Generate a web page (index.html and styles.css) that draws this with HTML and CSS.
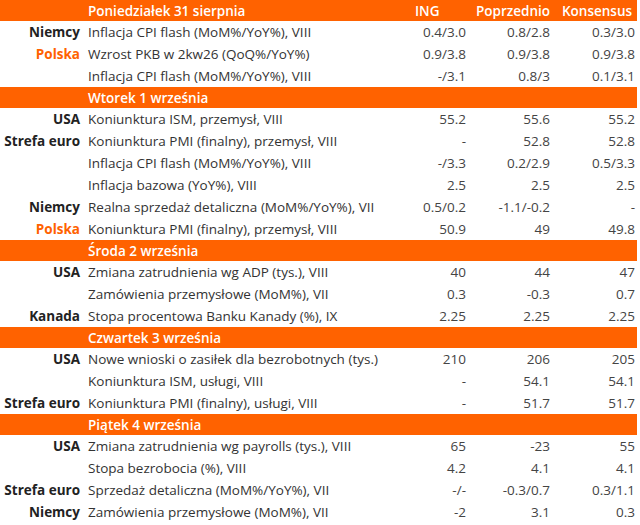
FILE: index.html
```html
<!DOCTYPE html>
<html lang="pl">
<head>
<meta charset="utf-8">
<title>Kalendarz</title>
<link rel="stylesheet" href="styles.css">
</head>
<body>
<table class="cal">
  <colgroup>
    <col class="c-country"><col class="c-desc"><col class="c-ing"><col class="c-prev"><col class="c-cons">
  </colgroup>
  <tbody>
    <tr class="day">
      <td></td><td class="day-title">Poniedziałek 31 sierpnia</td>
      <td class="h-ing">ING</td><td class="h-prev">Poprzednio</td><td class="h-cons">Konsensus</td>
    </tr>
    <tr><td class="cty">Niemcy</td><td class="desc">Inflacja CPI flash (MoM%/YoY%), VIII</td><td class="num">0.4/3.0</td><td class="num n2">0.8/2.8</td><td class="num n3">0.3/3.0</td></tr>
    <tr><td class="cty pl">Polska</td><td class="desc">Wzrost PKB w 2kw26 (QoQ%/YoY%)</td><td class="num">0.9/3.8</td><td class="num n2">0.9/3.8</td><td class="num n3">0.9/3.8</td></tr>
    <tr><td class="cty"></td><td class="desc">Inflacja CPI flash (MoM%/YoY%), VIII</td><td class="num">-/3.1</td><td class="num n2">0.8/3</td><td class="num n3">0.1/3.1</td></tr>

    <tr class="day"><td></td><td class="day-title">Wtorek 1 września</td><td></td><td></td><td></td></tr>
    <tr><td class="cty">USA</td><td class="desc">Koniunktura ISM, przemysł, VIII</td><td class="num">55.2</td><td class="num n2">55.6</td><td class="num n3">55.2</td></tr>
    <tr><td class="cty">Strefa euro</td><td class="desc">Koniunktura PMI (finalny), przemysł, VIII</td><td class="num">-</td><td class="num n2">52.8</td><td class="num n3">52.8</td></tr>
    <tr><td class="cty"></td><td class="desc">Inflacja CPI flash (MoM%/YoY%), VIII</td><td class="num">-/3.3</td><td class="num n2">0.2/2.9</td><td class="num n3">0.5/3.3</td></tr>
    <tr><td class="cty"></td><td class="desc">Inflacja bazowa (YoY%), VIII</td><td class="num">2.5</td><td class="num n2">2.5</td><td class="num n3">2.5</td></tr>
    <tr><td class="cty">Niemcy</td><td class="desc">Realna sprzedaż detaliczna (MoM%/YoY%), VII</td><td class="num">0.5/0.2</td><td class="num n2">-1.1/-0.2</td><td class="num n3">-</td></tr>
    <tr><td class="cty pl">Polska</td><td class="desc">Koniunktura PMI (finalny), przemysł, VIII</td><td class="num">50.9</td><td class="num n2">49</td><td class="num n3">49.8</td></tr>

    <tr class="day"><td></td><td class="day-title">Środa 2 września</td><td></td><td></td><td></td></tr>
    <tr><td class="cty">USA</td><td class="desc">Zmiana zatrudnienia wg ADP (tys.), VIII</td><td class="num">40</td><td class="num n2">44</td><td class="num n3">47</td></tr>
    <tr><td class="cty"></td><td class="desc">Zamówienia przemysłowe (MoM%), VII</td><td class="num">0.3</td><td class="num n2">-0.3</td><td class="num n3">0.7</td></tr>
    <tr><td class="cty">Kanada</td><td class="desc">Stopa procentowa Banku Kanady (%), IX</td><td class="num">2.25</td><td class="num n2">2.25</td><td class="num n3">2.25</td></tr>

    <tr class="day"><td></td><td class="day-title">Czwartek 3 września</td><td></td><td></td><td></td></tr>
    <tr><td class="cty">USA</td><td class="desc">Nowe wnioski o zasiłek dla bezrobotnych (tys.)</td><td class="num">210</td><td class="num n2">206</td><td class="num n3">205</td></tr>
    <tr><td class="cty"></td><td class="desc">Koniunktura ISM, usługi, VIII</td><td class="num">-</td><td class="num n2">54.1</td><td class="num n3">54.1</td></tr>
    <tr><td class="cty">Strefa euro</td><td class="desc">Koniunktura PMI (finalny), usługi, VIII</td><td class="num">-</td><td class="num n2">51.7</td><td class="num n3">51.7</td></tr>

    <tr class="day"><td></td><td class="day-title">Piątek 4 września</td><td></td><td></td><td></td></tr>
    <tr><td class="cty">USA</td><td class="desc">Zmiana zatrudnienia wg payrolls (tys.), VIII</td><td class="num">65</td><td class="num n2">-23</td><td class="num n3">55</td></tr>
    <tr><td class="cty"></td><td class="desc">Stopa bezrobocia (%), VIII</td><td class="num">4.2</td><td class="num n2">4.1</td><td class="num n3">4.1</td></tr>
    <tr><td class="cty">Strefa euro</td><td class="desc">Sprzedaż detaliczna (MoM%/YoY%), VII</td><td class="num">-/-</td><td class="num n2">-0.3/0.7</td><td class="num n3">0.3/1.1</td></tr>
    <tr><td class="cty">Niemcy</td><td class="desc">Zamówienia przemysłowe (MoM%), VII</td><td class="num">-2</td><td class="num n2">3.1</td><td class="num n3">0.3</td></tr>
  </tbody>
</table>
</body>
</html>
```

FILE: styles.css
```css
html, body {
  margin: 0;
  padding: 0;
  background: #ffffff;
}

body {
  font-family: "Open Sans", "Noto Sans", sans-serif;
  font-size: 13.5px;
  color: #333333;
}

.cal {
  width: 637px;
  border-collapse: collapse;
  table-layout: fixed;
}

.c-country { width: 84px; }
.c-desc { width: 326px; }
.c-ing { width: 60px; }
.c-prev { width: 83px; }
.c-cons { width: 84px; }

.cal td {
  padding: 0;
  height: 22px;
  white-space: nowrap;
  vertical-align: middle;
}

.cal tr.day td {
  height: 21px;
  background: #ff6200;
  color: #ffffff;
  font-weight: 600;
}

.day-title {
  padding-left: 4px !important;
}

.h-ing { padding-left: 5px !important; }
.h-prev { padding-left: 6px !important; }
.h-cons { padding-left: 9px !important; }

.cty {
  text-align: right;
  padding-right: 4px !important;
  font-weight: 700;
  color: #222222;
}

.cty.pl {
  color: #ff6200;
}

.desc {
  padding-left: 4px !important;
  color: #333333;
}

.num {
  text-align: right;
  padding-right: 4px !important;
  color: #444444;
}

.num.n2 { padding-right: 3px !important; }
.num.n3 { padding-right: 2px !important; }
```
